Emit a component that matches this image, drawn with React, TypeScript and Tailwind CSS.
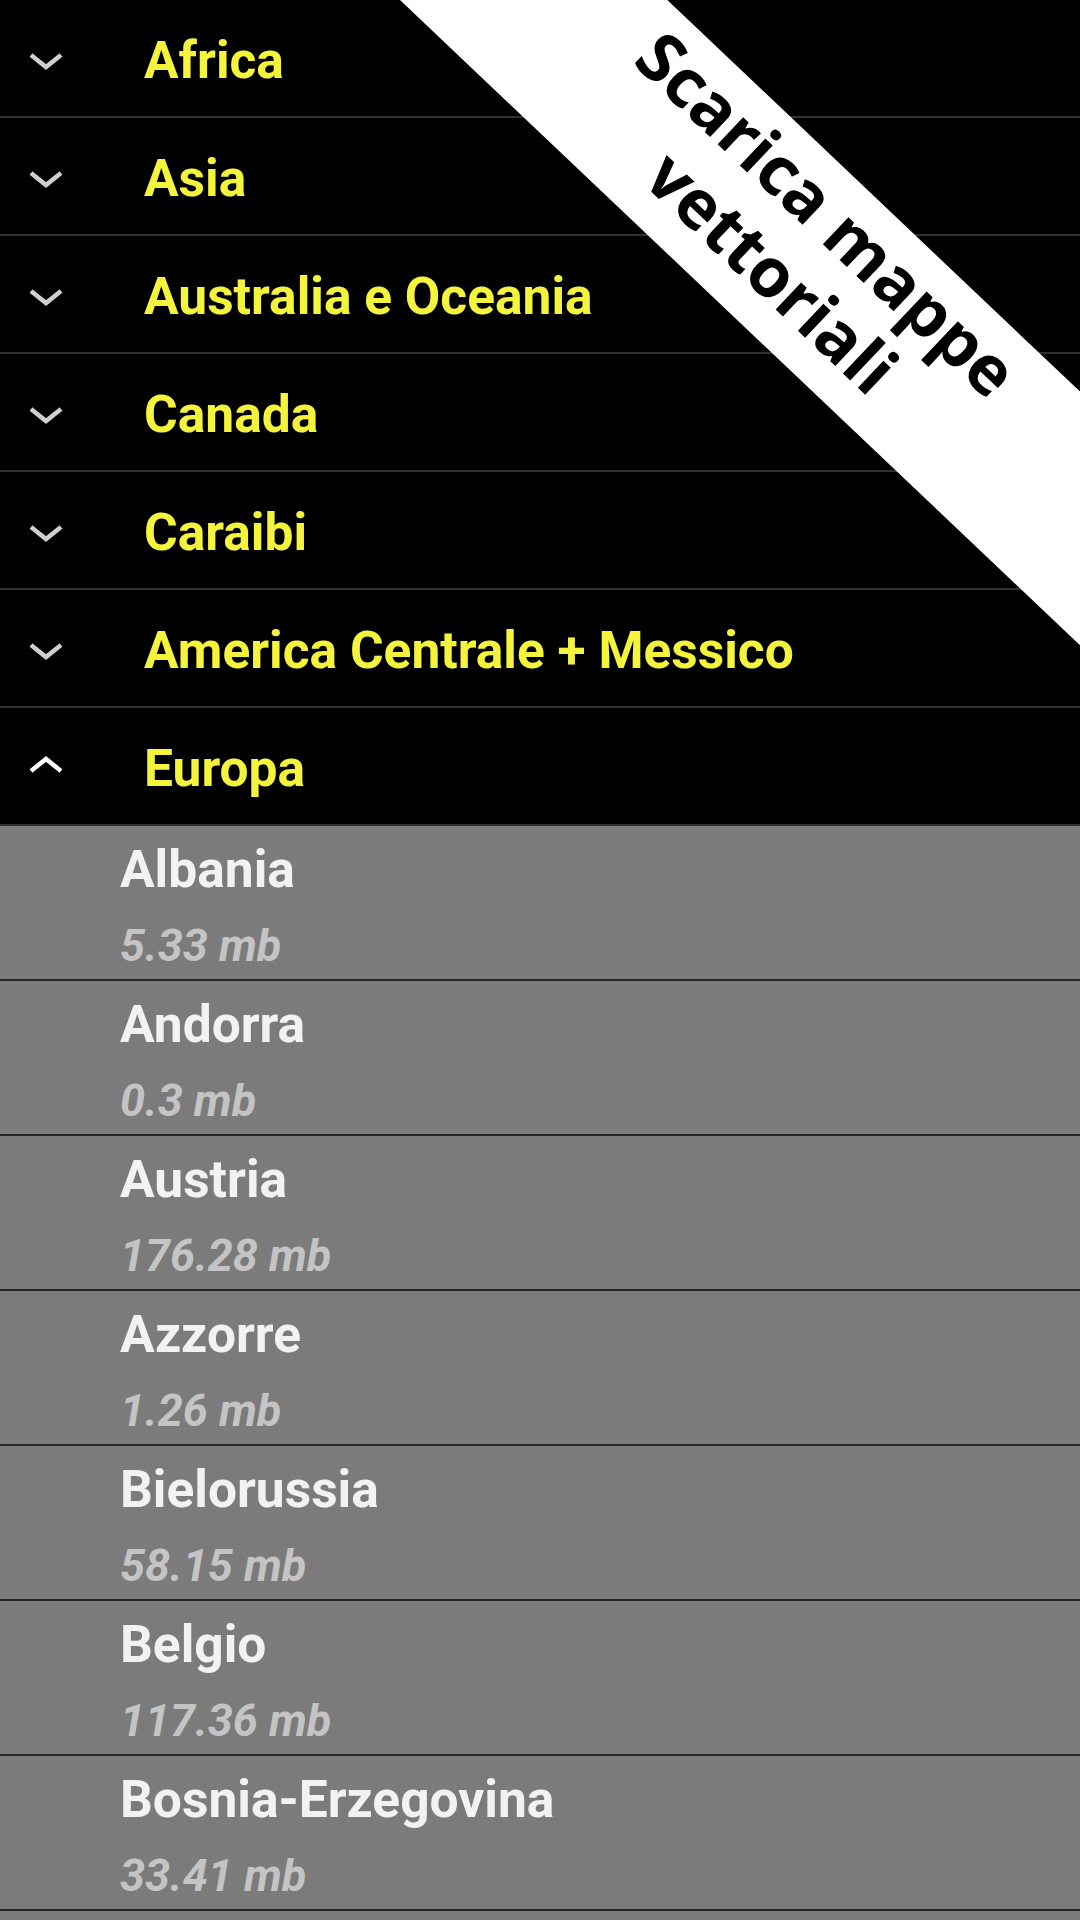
import React from 'react';

const regions = [
  'Africa',
  'Asia',
  'Australia e Oceania',
  'Canada',
  'Caraibi',
  'America Centrale + Messico',
];

const countries = [
  { name: 'Albania', size: '5.33 mb' },
  { name: 'Andorra', size: '0.3 mb' },
  { name: 'Austria', size: '176.28 mb' },
  { name: 'Azzorre', size: '1.26 mb' },
  { name: 'Bielorussia', size: '58.15 mb' },
  { name: 'Belgio', size: '117.36 mb' },
  { name: 'Bosnia-Erzegovina', size: '33.41 mb' },
];

function Chevron({ up }: { up?: boolean }) {
  return (
    <svg width="40" height="24" viewBox="0 0 40 24" className="overflow-visible shrink-0">
      <polyline
        points={up ? '5,14 20,2 35,14' : '5,6 20,18 35,6'}
        fill="none"
        stroke={up ? '#ffffff' : '#cfcfcf'}
        strokeWidth="4.5"
      />
    </svg>
  );
}

function RegionRow({ title, open }: { title: string; open?: boolean }) {
  return (
    <div className="flex items-center h-[118px] box-border pt-[6px] border-b-2 border-[#303030] bg-black">
      <div className="w-[144px] pl-[26px] flex">
        <Chevron up={open} />
      </div>
      <span className="text-[51.5px] leading-[60px] font-bold text-[#f4f43c] whitespace-nowrap">{title}</span>
    </div>
  );
}

function CountryRow({ name, size }: { name: string; size: string }) {
  return (
    <div className="flex flex-col h-[155px] box-border shrink-0 pl-[120px] pt-[14px] border-b-2 border-[#252525] bg-[#7b7b7b]">
      <span className="text-[51.5px] leading-[60px] font-bold text-[#f2f2f2] whitespace-nowrap">{name}</span>
      <span className="mt-[20px] text-[45px] leading-[52px] font-bold italic text-[#c4c4c4] whitespace-nowrap">{size}</span>
    </div>
  );
}

export default function App() {
  return (
    <div className="relative w-[1080px] h-[1920px] overflow-hidden bg-[#7b7b7b] font-['Roboto',sans-serif]">
      <div className="flex flex-col">
        {regions.map((r) => (
          <RegionRow key={r} title={r} />
        ))}
        <RegionRow title="Europa" open />
        {countries.map((c) => (
          <CountryRow key={c.name} name={c.name} size={c.size} />
        ))}
      </div>

      {/* diagonal ribbon in the top-right corner */}
      <div className="absolute left-[95px] top-[156px] w-[1400px] h-[184px] bg-white rotate-[43.5deg] pt-[4px] font-['Open_Sans',sans-serif] font-bold text-black text-[68px] leading-[80px]">
        <p className="text-center">
          Scarica mappe
          <br />
          vettoriali
        </p>
      </div>
    </div>
  );
}
